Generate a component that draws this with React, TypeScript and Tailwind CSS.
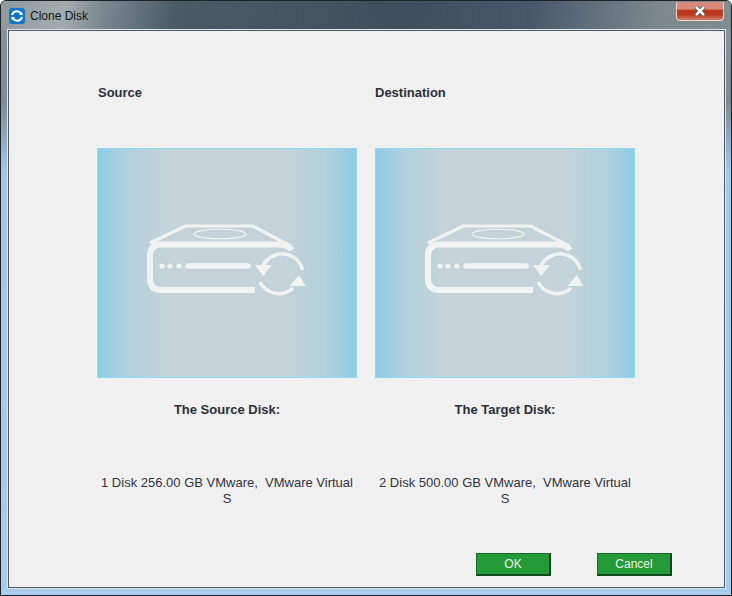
import React from "react";

const font = "font-['Liberation_Sans',Arial,sans-serif]";

function DiskIcon() {
  return (
    <svg width="160" height="76" viewBox="146 222 160 76" fill="none" stroke="#f1f3f3" className="block">
      <path d="M150 243 L185.500 226 H252.500 L291 246" strokeWidth="3.200" strokeLinejoin="round" />
      <path d="M255 290 H161 Q150 290 150 278 V256 Q150 244.500 161 244.500 H278 Q289 244.500 292 250" strokeWidth="6" />
      <ellipse cx="220" cy="234" rx="26" ry="4.800" strokeWidth="1.100" />
      <circle cx="162" cy="266" r="2.600" fill="#f1f3f3" stroke="none" />
      <circle cx="170" cy="266" r="2.600" fill="#f1f3f3" stroke="none" />
      <circle cx="179" cy="266" r="2.600" fill="#f1f3f3" stroke="none" />
      <path d="M188 266 H248" strokeWidth="5.500" strokeLinecap="round" />
      <path d="M263 266 A21 21 0 0 1 302.500 270" strokeWidth="3.600" />
      <path d="M255 265 H272 L263 276 Z" fill="#f1f3f3" stroke="none" />
      <path d="M293 288 A21 21 0 0 1 260 282" strokeWidth="3.600" />
      <path d="M289.500 286 H305.500 L299 275 Z" fill="#f1f3f3" stroke="none" />
    </svg>
  );
}

function Column({ head, label, info, indent }: { head: string; label: string; info: string; indent?: boolean }) {
  return (
    <div className="w-[260px]">
      <div className={`h-[63px] ${indent ? "pl-px" : ""} text-[13px] font-bold leading-[15px] text-[#2a2f3a]`}>{head}</div>
      <div className="flex h-[230px] items-center justify-center border border-[#8fdcf2] bg-[linear-gradient(90deg,#8ecbe5_0%,#aed0de_10%,#c4d3d9_26%,#c4d3d9_74%,#aed0de_90%,#8ecbe5_100%)] pb-[6px] pr-[2px]">
        <DiskIcon />
      </div>
      <div className="mt-[24px] text-center text-[13px] font-bold leading-[16px] text-[#2a2f3a]">{label}</div>
      <div className="mt-[57px] whitespace-pre-wrap text-center text-[13px] leading-[16px] text-[#30343e]">{info}</div>
    </div>
  );
}

function GreenButton({ text }: { text: string }) {
  return (
    <button className="h-[23px] w-[75px] border border-[#1a6a2c] border-b-2 border-r-2 border-b-[#0d4a1a] border-r-[#0d4a1a] bg-[#259a38] text-[12px] leading-none text-[#e8f4e8]">
      {text}
    </button>
  );
}

export default function App() {
  return (
    <div className={`${font} flex h-[596px] w-[732px] flex-col overflow-hidden rounded-t-[6px] border border-[#1e2328] bg-[linear-gradient(180deg,#8b989f_0px,#7b8a93_100px,#a4c7e8_170px,#a9cbec_100%)]`}>
      <div className="flex h-[29px] shrink-0 items-start bg-[linear-gradient(100deg,#8f999d_0%,#a4acad_9%,#7a8890_14%,#4a5b68_24%,#3d4f5e_55%,#46576a_72%,#7d898f_90%,#7f8c92_100%)] pl-[8px] pr-[6px]">
        <div className="mt-[7px] flex h-[16px] w-[16px] items-center justify-center rounded-[3px] bg-[#1177c4]">
          <svg width="14" height="14" viewBox="0 0 14 14" fill="none" stroke="#fff" strokeWidth="2">
            <path d="M2 6 A5 5 0 0 1 11 4.500" />
            <path d="M12 8 A5 5 0 0 1 3 9.500" />
            <path d="M9 6 H13 L12 3 Z" fill="#fff" stroke="none" />
            <path d="M5 8 H1 L2 11 Z" fill="#fff" stroke="none" />
          </svg>
        </div>
        <span className="ml-[5px] mt-[8px] text-[12px] leading-[14px] text-[#0f1720]">Clone Disk</span>
        <div className="ml-auto mr-px mt-px flex h-[19px] w-[48px] items-center justify-center rounded-b-[4px] border border-t-0 border-[#e9d5d0] bg-[linear-gradient(180deg,#d98d80_0%,#d78676_40%,#bb3a1e_45%,#bb3a1e_70%,#d4806e_100%)]">
          <svg width="12" height="10" viewBox="0 0 12 10" className="block">
            <path d="M2 1 L10 9 M10 1 L2 9" stroke="#3c4650" strokeWidth="4" />
            <path d="M2 1 L10 9 M10 1 L2 9" stroke="#fff" strokeWidth="2.500" />
          </svg>
        </div>
      </div>
      <div className="mb-[7px] ml-[7px] mr-[6px] flex flex-1 flex-col border border-[#4f5a64] bg-[#f0f0f0] outline outline-1 outline-[#dfe6ea]">
        <div className="flex gap-[18px] pl-[88px] pt-[54px]">
          <Column indent head="Source" label="The Source Disk:" info={"1 Disk 256.00 GB VMware,  VMware Virtual S"} />
          <Column head="Destination" label="The Target Disk:" info={"2 Disk 500.00 GB VMware,  VMware Virtual S"} />
        </div>
        <div className="mt-auto flex justify-end gap-[46px] pb-[11px] pr-[52px]">
          <GreenButton text="OK" />
          <GreenButton text="Cancel" />
        </div>
      </div>
    </div>
  );
}
